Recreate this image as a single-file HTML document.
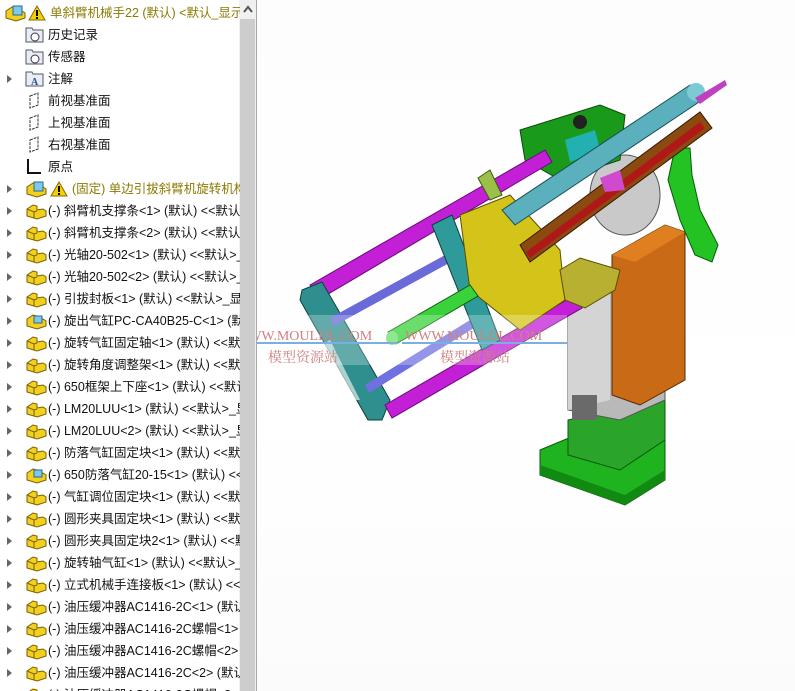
<!DOCTYPE html>
<html><head><meta charset="utf-8"><style>
html,body{margin:0;padding:0;width:795px;height:691px;overflow:hidden;background:#fff;font-family:"Liberation Sans","Noto Sans CJK SC",sans-serif;}
#tree{position:absolute;left:0;top:0;width:256px;height:691px;background:#fff;border-right:1px solid #a8a8a8;overflow:hidden;}
.r{position:absolute;left:0;height:22px;width:240px;white-space:nowrap;overflow:hidden;font-size:12.5px;color:#111;line-height:22px;}
.r .a{position:absolute;left:7px;top:7px;width:0;height:0;border-left:5px solid #666;border-top:4px solid transparent;border-bottom:4px solid transparent;}
.r .i{position:absolute;left:25px;top:2px;}
.r .w{position:absolute;top:3px;}
.r .t{position:absolute;left:48px;top:0;}
.y{color:#8a7a00;}
#sb{position:absolute;left:239px;top:0;width:17px;height:691px;background:#f0f0f0;}
#th{position:absolute;left:240px;top:19px;width:15px;height:672px;background:#cdcdcd;}
#view{position:absolute;left:257px;top:0;width:538px;height:691px;background:linear-gradient(#fdfdfd,#ffffff 60%,#fbfbfb);}
</style></head><body>
<div id="view">
<svg width="538" height="691" viewBox="257 0 538 691" style="position:absolute;left:0;top:0">
<polygon points="540,450 600,425 665,440 665,480 625,505 540,475" fill="#1fb31f" stroke="#0a5a0a"/>
<polygon points="540,465 625,495 665,470 665,480 625,505 540,475" fill="#118a11"/>
<polygon points="568,420 665,400 665,440 620,470 568,455" fill="#2aa52a" stroke="#0a5a0a"/>
<polygon points="568,300 640,275 665,300 665,400 620,420 568,410" fill="#b9b9b9" stroke="#555"/>
<polygon points="568,300 610,290 610,400 568,410" fill="#d4d4d4"/>
<rect x="572" y="395" width="25" height="25" fill="#6a6a6a"/>
<polygon points="612,255 665,225 685,232 685,380 640,405 612,395" fill="#c86a16" stroke="#5a2a00"/>
<polygon points="612,255 665,225 685,232 635,262" fill="#e07f20"/>
<ellipse cx="625" cy="195" rx="35" ry="40" fill="#c9c9c9" stroke="#555"/>
<polygon points="520,130 600,105 625,115 620,160 560,180 525,160" fill="#1a9a1a" stroke="#0a4a0a"/>
<polygon points="565,140 595,130 600,150 570,162" fill="#22b0b0"/>
<circle cx="580" cy="122" r="7" fill="#222"/>
<path d="M675,148 L690,148 L692,175 L700,210 L718,245 L712,262 L695,255 L680,220 L668,180 Z" fill="#22c322" stroke="#0a5a0a"/>
<polygon points="310,285 545,150 552,162 318,300" fill="#c21fd6" stroke="#6a0a7a"/>
<polygon points="302,290 322,282 390,400 382,420 368,420 300,300" fill="#2f8f8f" stroke="#0a4040"/>
<polygon points="330,340 360,400 350,400 322,345" fill="#fff" opacity=".6"/>
<polygon points="330,318 500,225 504,233 334,326" fill="#6a6ad8"/>
<polygon points="365,385 470,320 474,328 369,393" fill="#7070e0"/>
<polygon points="385,405 575,295 582,308 392,418" fill="#c21fd6" stroke="#6a0a7a"/>
<polygon points="432,225 452,215 500,340 482,350" fill="#2e9a9a" stroke="#0a4040"/>
<polygon points="460,215 510,195 560,250 565,300 520,330 470,290" fill="#d4c41a" stroke="#5a5000"/>
<polygon points="388,332 470,285 478,296 396,344" fill="#3ad23a" stroke="#0a5a0a"/>
<ellipse cx="392" cy="338" rx="6" ry="7" fill="#6ae06a"/>
<polygon points="502,210 690,85 702,100 515,225" fill="#5ab0bc" stroke="#1a5058"/>
<ellipse cx="696" cy="92" rx="9" ry="9" fill="#7ccad4"/>
<polygon points="520,245 700,112 712,128 530,262" fill="#8a4a10" stroke="#3a1a00"/>
<polygon points="526,252 700,122 705,128 530,258" fill="#b01818"/>
<polygon points="560,270 580,258 620,270 615,290 585,308 565,300" fill="#b7b030" stroke="#5a5000"/>
<polygon points="478,178 490,170 502,195 490,200" fill="#9ac04a" stroke="#3a5a0a"/>
<polygon points="600,178 620,170 625,190 605,192" fill="#d04ad0"/>
<polygon points="695,98 725,80 727,85 700,104" fill="#c040c0"/>
<rect x="257" y="315" width="310" height="50" fill="#fff" opacity=".25"/>
<text x="235" y="340" font-family="Liberation Serif,serif" font-size="14" fill="#d08080">WWW.MOULDL.COM</text>
<text x="405" y="340" font-family="Liberation Serif,serif" font-size="14" fill="#d08080">WWW.MOULDL.COM</text>
<rect x="257" y="342" width="140" height="2" fill="#7ab0e0"/>
<rect x="402" y="342" width="165" height="2" fill="#7ab0e0"/>
<text x="268" y="362" font-family="Noto Serif CJK SC,serif" font-size="14" fill="#d08080">模型资源站</text>
<text x="440" y="362" font-family="Noto Serif CJK SC,serif" font-size="14" fill="#d08080">模型资源站</text>
</svg>
</div>
<div id="tree">
<div id="sb"></div><div id="th"></div>
<svg style="position:absolute;left:243px;top:5px" width="10" height="8"><path d="M1,7 L5,2 L9,7" stroke="#555" stroke-width="2" fill="none"/></svg>
</div>
<script>
var items=[
["asm","","<span class='y'>单斜臂机械手22 (默认) &lt;默认_显示状态-1&gt;</span>"],
["fold","","历史记录"],
["fold","","传感器"],
["foldA","a","注解"],
["plane","","前视基准面"],
["plane","","上视基准面"],
["plane","","右视基准面"],
["orig","","原点"],
["asm","a","<span class='y'>(固定) 单边引拔斜臂机旋转机构</span>"],
["p","a","(-) 斜臂机支撑条&lt;1&gt; (默认) &lt;&lt;默认&gt;_显"],
["p","a","(-) 斜臂机支撑条&lt;2&gt; (默认) &lt;&lt;默认&gt;_显"],
["p","a","(-) 光轴20-502&lt;1&gt; (默认) &lt;&lt;默认&gt;_显"],
["p","a","(-) 光轴20-502&lt;2&gt; (默认) &lt;&lt;默认&gt;_显"],
["p","a","(-) 引拔封板&lt;1&gt; (默认) &lt;&lt;默认&gt;_显"],
["pa","a","(-) 旋出气缸PC-CA40B25-C&lt;1&gt; (默认)"],
["p","a","(-) 旋转气缸固定轴&lt;1&gt; (默认) &lt;&lt;默认"],
["p","a","(-) 旋转角度调整架&lt;1&gt; (默认) &lt;&lt;默认"],
["p","a","(-) 650框架上下座&lt;1&gt; (默认) &lt;&lt;默认"],
["p","a","(-) LM20LUU&lt;1&gt; (默认) &lt;&lt;默认&gt;_显"],
["p","a","(-) LM20LUU&lt;2&gt; (默认) &lt;&lt;默认&gt;_显"],
["p","a","(-) 防落气缸固定块&lt;1&gt; (默认) &lt;&lt;默认"],
["pa","a","(-) 650防落气缸20-15&lt;1&gt; (默认) &lt;&lt;"],
["p","a","(-) 气缸调位固定块&lt;1&gt; (默认) &lt;&lt;默认"],
["p","a","(-) 圆形夹具固定块&lt;1&gt; (默认) &lt;&lt;默认"],
["p","a","(-) 圆形夹具固定块2&lt;1&gt; (默认) &lt;&lt;默"],
["p","a","(-) 旋转轴气缸&lt;1&gt; (默认) &lt;&lt;默认&gt;_"],
["p","a","(-) 立式机械手连接板&lt;1&gt; (默认) &lt;&lt;默"],
["p","a","(-) 油压缓冲器AC1416-2C&lt;1&gt; (默认)"],
["p","a","(-) 油压缓冲器AC1416-2C螺帽&lt;1&gt; (默"],
["p","a","(-) 油压缓冲器AC1416-2C螺帽&lt;2&gt; (默"],
["p","a","(-) 油压缓冲器AC1416-2C&lt;2&gt; (默认)"],
["p","a","(-) 油压缓冲器AC1416-2C螺帽&lt;3&gt; (默"]
];
var icons={
p:'<svg width="22" height="18"><path d="M2,7 L8,3 L12,4 L12,8 L18,7 L21,9 L21,14 L12,17 L2,14 Z" fill="#f2d020" stroke="#7a6000"/><path d="M2,7 L9,10 L12,9 M9,10 L9,16" stroke="#7a6000" fill="none"/></svg>',
pa:'<svg width="22" height="18"><path d="M2,7 L8,3 L12,4 L12,8 L18,7 L21,9 L21,14 L12,17 L2,14 Z" fill="#f2d020" stroke="#7a6000"/><rect x="9" y="4" width="8" height="7" fill="#7ec8ec" stroke="#2a6a8a"/></svg>',
asm:'<svg width="22" height="18"><path d="M2,7 L8,3 L12,4 L12,8 L18,7 L21,9 L21,14 L12,17 L2,14 Z" fill="#f2d020" stroke="#7a6000"/><rect x="9" y="2" width="9" height="9" fill="#7ec8ec" stroke="#2a6a8a"/></svg>',
fold:'<svg width="22" height="18"><path d="M1,2 L7,2 L8,4 L18,4 L18,16 L1,16 Z" fill="#e8eef4" stroke="#556"/><circle cx="10" cy="11" r="4" fill="#fff" stroke="#335"/></svg>',
foldA:'<svg width="22" height="18"><path d="M1,2 L7,2 L8,4 L18,4 L18,16 L1,16 Z" fill="#e8eef4" stroke="#556"/><text x="6" y="15" font-size="10" font-family="Liberation Serif" fill="#2a4a9a" font-weight="bold">A</text></svg>',
plane:'<svg width="22" height="18"><path d="M5,4 L13,1 L13,13 L5,16 Z" fill="none" stroke="#333" stroke-dasharray="3,1"/></svg>',
orig:'<svg width="22" height="18"><path d="M3,1 L3,15 L16,15" stroke="#111" stroke-width="2" fill="none"/></svg>'
};
var warn='<svg width="18" height="16"><path d="M9,1 L17,15 L1,15 Z" fill="#f5d000" stroke="#8a6a00"/><rect x="8" y="5" width="2" height="6" fill="#000"/><rect x="8" y="12" width="2" height="2" fill="#000"/></svg>';
var t=document.getElementById('tree');
for(var k=0;k<items.length;k++){
 var it=items[k],d=document.createElement('div');d.className='r';d.style.top=(2+22*k)+'px';
 var h='';
 if(it[1])h+='<div class="a"></div>';
 var ix=(k==0)?4:25, tx=48;
 h+='<div class="i" style="left:'+ix+'px">'+icons[it[0]]+'</div>';
 if(k==0){h+='<div class="w" style="left:28px">'+warn+'</div>';tx=50;}
 if(k==8){h+='<div class="w" style="left:50px">'+warn+'</div>';tx=72;}
 h+='<div class="t" style="left:'+tx+'px">'+it[2]+'</div>';
 d.innerHTML=h;t.appendChild(d);
}
</script>
</body></html>
